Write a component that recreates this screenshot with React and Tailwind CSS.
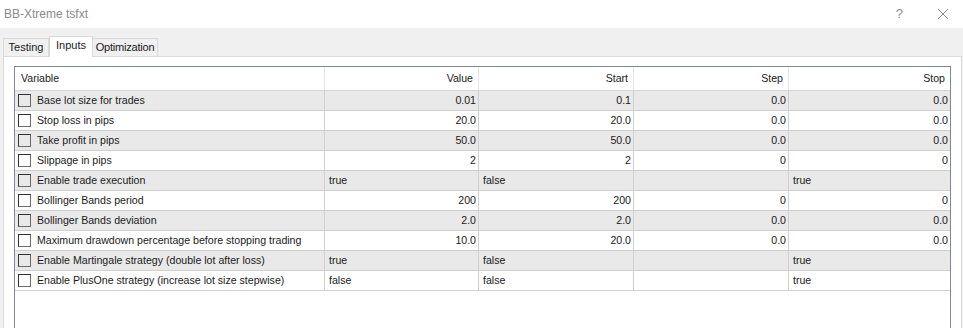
import React from "react";

const rows = [
  ["Base lot size for trades", "0.01", "0.1", "0.0", "0.0"],
  ["Stop loss in pips", "20.0", "20.0", "0.0", "0.0"],
  ["Take profit in pips", "50.0", "50.0", "0.0", "0.0"],
  ["Slippage in pips", "2", "2", "0", "0"],
  ["Enable trade execution", "true", "false", "", "true"],
  ["Bollinger Bands period", "200", "200", "0", "0"],
  ["Bollinger Bands deviation", "2.0", "2.0", "0.0", "0.0"],
  ["Maximum drawdown percentage before stopping trading", "10.0", "20.0", "0.0", "0.0"],
  ["Enable Martingale strategy (double lot after loss)", "true", "false", "", "true"],
  ["Enable PlusOne strategy (increase lot size stepwise)", "false", "false", "", "true"],
];

const isBool = (v) => v === "true" || v === "false";

const Cell = ({ value, last }) => (
  <div
    className={`h-full flex items-center px-[4px] ${last ? "" : "border-r border-[#cfcfcf]"} ${
      isBool(value) ? "justify-start" : "justify-end pr-[2px]"
    }`}
  >
    {value}
  </div>
);

export default function App() {
  return (
    <div
      className="w-[963px] h-[328px] overflow-hidden bg-[#f0f0f0] text-[10.6px] text-[#1a1a1a]"
      style={{ fontFamily: '"Liberation Sans", Arial, sans-serif' }}
    >
      {/* title bar */}
      <div className="h-[28px] bg-white flex items-center justify-between pl-[4px] pr-[14px]">
        <span className="text-[12px] text-[#8a8a8a]">BB-Xtreme tsfxt</span>
        <div className="flex items-center gap-[34px] text-[#8a8a8a]">
          <span className="text-[13px] font-light">?</span>
          <svg width="12" height="12" viewBox="0 0 12 12" className="stroke-[#8a8a8a]">
            <path d="M1 1 L11 11 M11 1 L1 11" strokeWidth="1" fill="none" />
          </svg>
        </div>
      </div>

      {/* tabs */}
      <div className="pt-[7px] pl-[3px] flex items-end h-[28px] text-[11px]">
        <div className="h-[18px] w-[46px] justify-center flex items-center border border-b-0 border-[#d9d9d9] bg-[#f0f0f0]">Testing</div>
        <div className="h-[21px] w-[44px] justify-center pb-[3px] flex items-center border border-b-0 border-[#d9d9d9] bg-white -mb-px relative z-10">Inputs</div>
        <div className="h-[18px] w-[65px] justify-center flex items-center border border-b-0 border-l-0 border-[#d9d9d9] bg-[#f0f0f0] tracking-[-0.2px]">Optimization</div>
      </div>

      {/* panel */}
      <div className="ml-[3px] mr-px h-[300px] bg-white border border-[#d9d9d9] pt-[9px] pl-[10px] pr-[10px]">
        <div className="border border-[#828790] h-[300px] bg-white">
          {/* header */}
          <div className="grid grid-cols-[310px_154px_155px_155px_1fr] h-[24px] border-b border-[#d5d5d5]">
            <div className="flex items-center pl-[6px] border-r border-[#e5e5e5]">Variable</div>
            {["Value", "Start", "Step", "Stop"].map((h, i) => (
              <div key={h} className={`flex items-center justify-end pr-[5px] ${i < 3 ? "border-r border-[#e5e5e5]" : ""}`}>
                {h}
              </div>
            ))}
          </div>
          {rows.map((r, idx) => (
            <div
              key={r[0]}
              className={`grid grid-cols-[310px_154px_155px_155px_1fr] h-[20px] border-b border-[#cfcfcf] ${
                idx % 2 === 0 ? "bg-[#e9e9e9]" : "bg-white"
              }`}
            >
              <div className="h-full flex items-center pl-[3px] border-r border-[#cfcfcf]">
                <span className="w-[13px] h-[13px] border border-[#333] border-r-[#6a6a6a] border-b-[#6a6a6a] mr-[6px] shrink-0" />
                <span className="whitespace-nowrap">{r[0]}</span>
              </div>
              <Cell value={r[1]} />
              <Cell value={r[2]} />
              <Cell value={r[3]} />
              <Cell value={r[4]} last />
            </div>
          ))}
        </div>
      </div>
    </div>
  );
}
